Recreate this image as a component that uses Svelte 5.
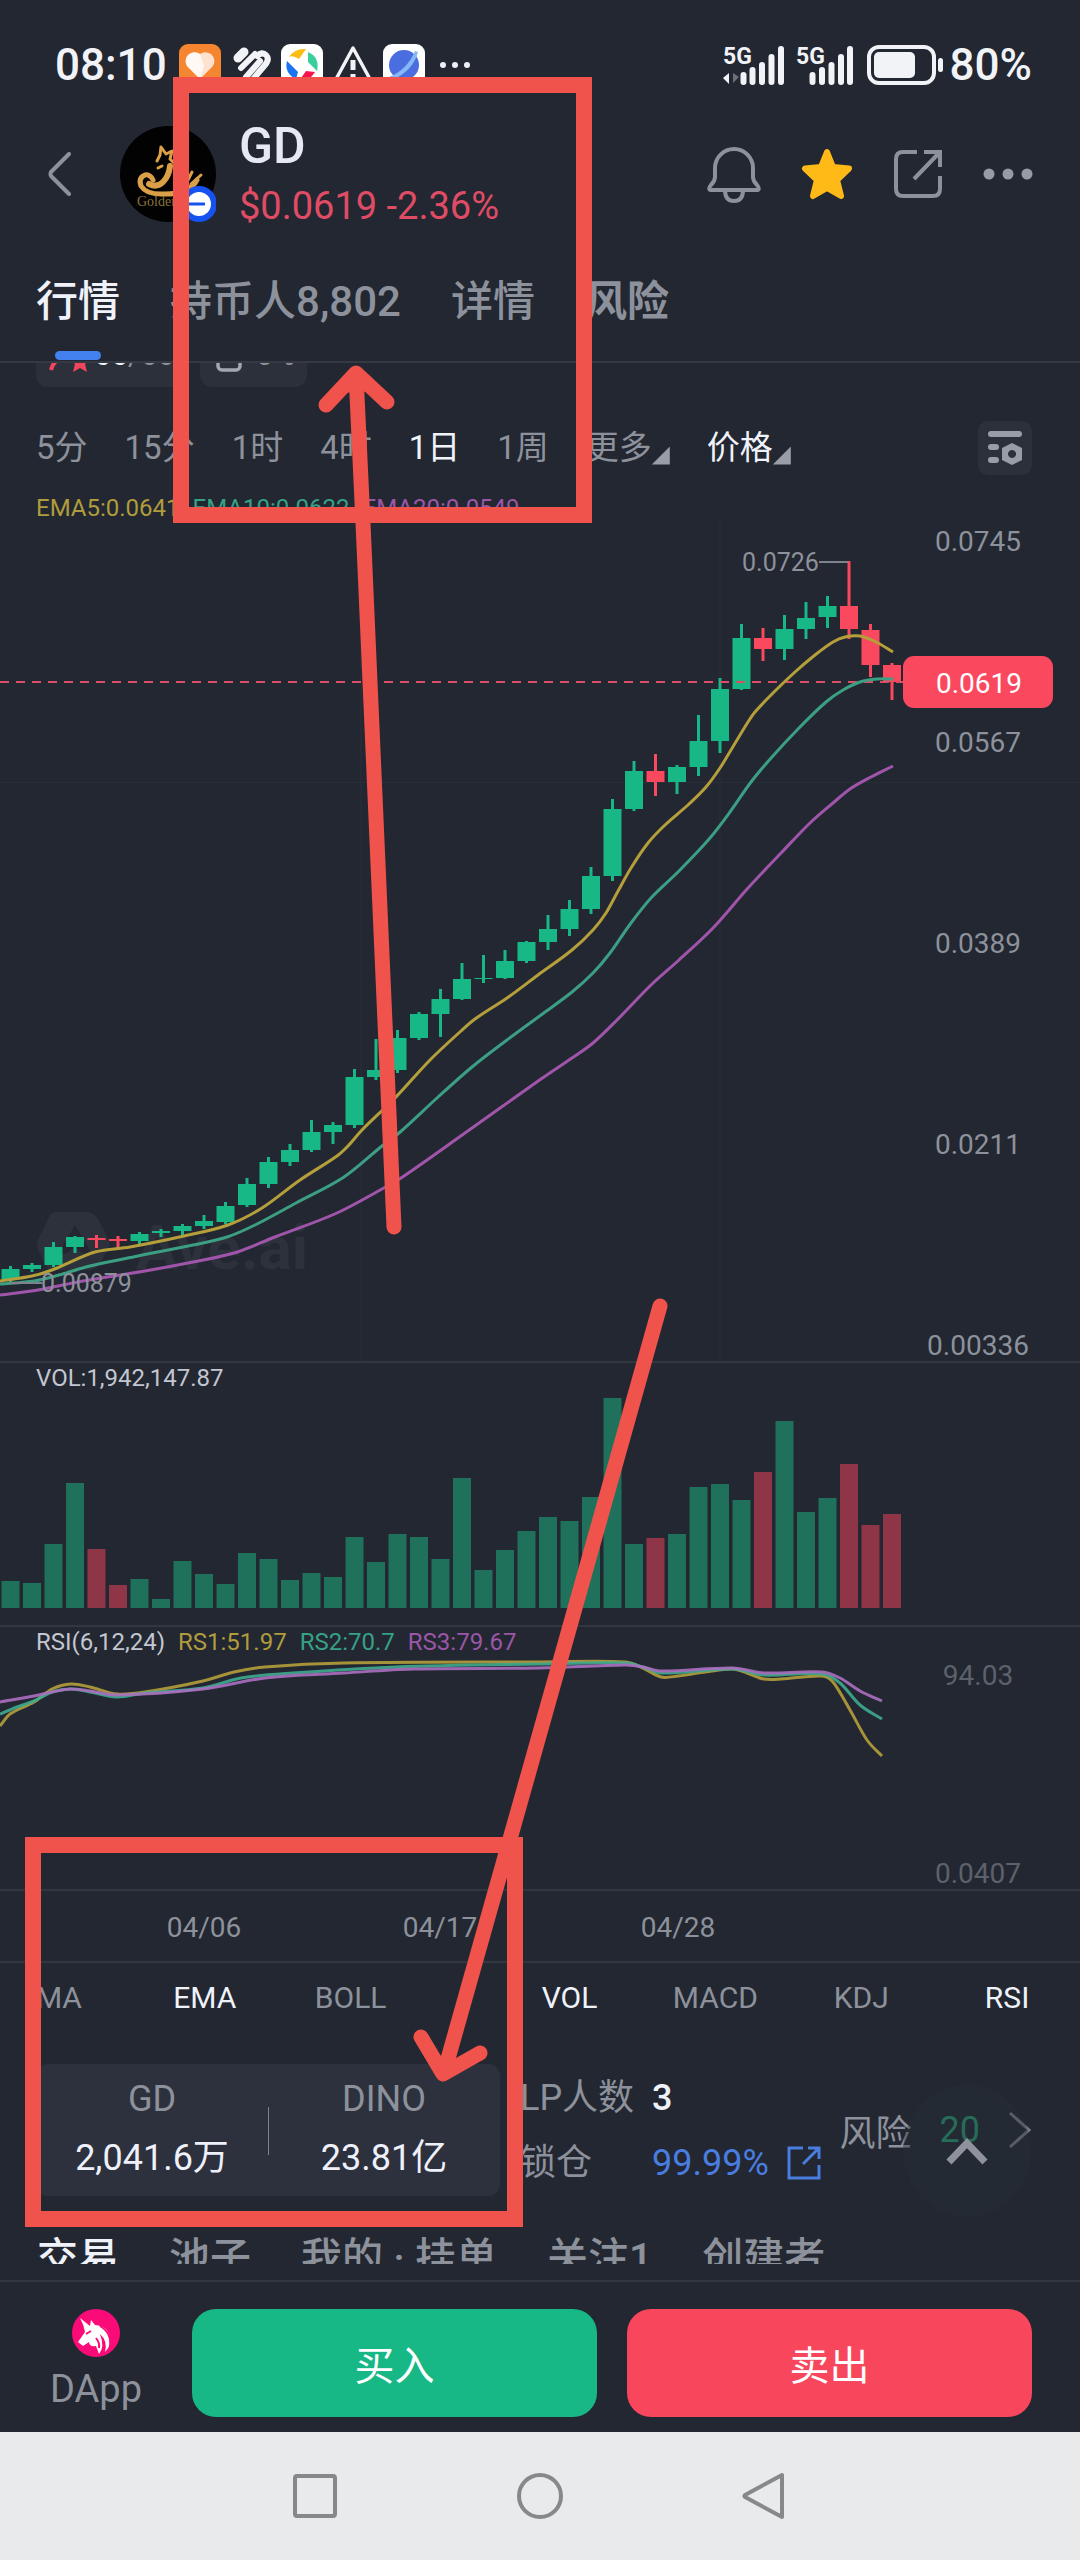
<script>
  const STEP = 21.5;
  const START = 10.5;

  // [open/close top, open/close bottom, high, low, falling]
  const candles = [
    [1269, 1279, 1266, 1283, 0], [1265, 1269, 1263, 1272, 0], [1247, 1265, 1242, 1267, 0],
    [1237, 1247, 1236, 1253, 0], [1238, 1240, 1235, 1248, 1], [1239, 1241, 1236, 1248, 1],
    [1234, 1241, 1232, 1244, 0], [1231, 1233, 1229, 1237, 0], [1226, 1231, 1224, 1235, 0],
    [1221, 1226, 1215, 1229, 0], [1206, 1222, 1202, 1224, 0], [1184, 1205, 1178, 1207, 0],
    [1162, 1184, 1157, 1188, 0], [1150, 1162, 1144, 1166, 0], [1132, 1150, 1120, 1152, 0],
    [1125, 1132, 1122, 1144, 0], [1077, 1125, 1069, 1128, 0], [1070, 1077, 1039, 1080, 0],
    [1038, 1070, 1030, 1073, 0], [1014, 1038, 1012, 1040, 0], [999, 1014, 989, 1037, 0],
    [979, 999, 963, 1000, 0], [978, 979, 955, 983, 0], [961, 978, 950, 979, 0],
    [942, 961, 941, 963, 0], [929, 942, 915, 950, 0], [909, 929, 900, 936, 0],
    [876, 909, 867, 914, 0], [809, 876, 799, 881, 0], [771, 809, 761, 811, 0],
    [771, 782, 754, 796, 1], [767, 782, 765, 794, 0], [741, 767, 715, 776, 0],
    [689, 741, 678, 753, 0], [638, 689, 624, 690, 0], [638, 649, 628, 661, 1],
    [629, 649, 615, 660, 0], [618, 629, 602, 639, 0], [606, 617, 596, 628, 0],
    [606, 629, 561, 639, 1], [630, 665, 624, 677, 1], [665, 682, 663, 700, 1]
  ];

  const volumes = [
    27, 25, 64, 125, 59, 23, 29, 9, 47, 34, 24, 55, 49, 28, 35, 31, 71, 46, 74, 71, 49,
    130, 38, 58, 77, 91, 87, 111, 210, 64, 70, 74, 121, 124, 108, 136, 187, 96, 110, 144, 83, 94
  ];

  const ema = [
    { color: '#a055ab', points: [[0, 1295], [38, 1290], [83, 1281], [145, 1271], [193, 1262], [234, 1253], [275, 1237], [337, 1213], [382, 1189], [401, 1178], [465, 1133], [541, 1079], [572, 1058], [593, 1043], [617, 1020], [651, 985], [679, 960], [713, 928], [748, 888], [782, 852], [810, 823], [833, 803], [850, 789], [871, 777], [893, 766]] },
    { color: '#3c9f83', points: [[0, 1284], [34, 1281], [59, 1275], [90, 1266], [138, 1256], [193, 1245], [227, 1237], [255, 1225], [296, 1203], [344, 1177], [382, 1146], [399, 1133], [437, 1098], [472, 1067], [507, 1040], [541, 1015], [572, 992], [593, 973], [610, 953], [631, 923], [651, 898], [679, 871], [710, 838], [730, 812], [751, 782], [772, 757], [799, 728], [826, 702], [843, 690], [860, 682], [877, 679], [893, 679]] },
    { color: '#b59f3b', points: [[0, 1281], [32, 1276], [52, 1270], [95, 1252], [130, 1247], [184, 1236], [228, 1225], [262, 1208], [300, 1180], [337, 1156], [348, 1146], [362, 1130], [396, 1097], [430, 1060], [461, 1031], [475, 1019], [507, 998], [538, 975], [572, 950], [593, 930], [606, 913], [617, 893], [631, 868], [648, 843], [665, 825], [689, 804], [706, 787], [720, 768], [734, 745], [748, 722], [755, 712], [774, 692], [795, 672], [815, 655], [833, 642], [845, 637], [860, 636], [876, 642], [893, 652]] }
  ];

  const rsi = [
    { color: '#b59f3b', points: [[0, 1726], [10, 1714], [34, 1702], [52, 1689], [71, 1684], [90, 1687], [117, 1694], [145, 1692], [203, 1681], [234, 1672], [265, 1667], [344, 1663], [540, 1662], [626, 1662], [643, 1668], [661, 1677], [678, 1676], [712, 1671], [733, 1669], [747, 1673], [764, 1679], [781, 1679], [822, 1676], [833, 1682], [850, 1710], [867, 1740], [882, 1756]] },
    { color: '#3fab8f', points: [[0, 1714], [17, 1707], [34, 1701], [52, 1692], [71, 1689], [90, 1692], [117, 1697], [145, 1693], [203, 1688], [241, 1678], [293, 1673], [396, 1667], [540, 1664], [626, 1663], [643, 1667], [661, 1673], [733, 1669], [764, 1675], [822, 1674], [840, 1683], [860, 1705], [882, 1719]] },
    { color: '#ab6fc0', points: [[0, 1702], [34, 1696], [52, 1692], [71, 1689], [90, 1691], [117, 1695], [203, 1689], [265, 1678], [344, 1673], [413, 1669], [540, 1668], [626, 1665], [643, 1667], [661, 1671], [733, 1668], [764, 1673], [822, 1672], [840, 1678], [860, 1691], [882, 1701]] }
  ];

  const scale = [['0.0745', 541], ['0.0567', 742], ['0.0389', 943], ['0.0211', 1144], ['0.00336', 1345]];
  const dates = [['04/06', 204], ['04/17', 440], ['04/28', 678]];
  const frames = ['5分', '15分', '1时', '4时', '1日', '1周'];

  function smooth(p) {
    let d = `M${p[0][0]} ${p[0][1]}`;
    for (let i = 0; i < p.length - 1; i++) {
      const a = p[i - 1] ?? p[i];
      const b = p[i];
      const c = p[i + 1];
      const e = p[i + 2] ?? c;
      const h = (c[0] - b[0]) / 3;
      const m1 = c[0] === a[0] ? 0 : (c[1] - a[1]) / (c[0] - a[0]);
      const m2 = e[0] === b[0] ? 0 : (e[1] - b[1]) / (e[0] - b[0]);
      d += `C${b[0] + h} ${b[1] + m1 * h} ${c[0] - h} ${c[1] - m2 * h} ${c[0]} ${c[1]}`;
    }
    return d;
  }
</script>

<div class="screen">
  <div class="status">
    <span class="clock">08:10</span>
    <svg class="app" viewBox="0 0 42 42"><rect width="42" height="42" rx="9" fill="#f5862f" /><path d="M21 35L8 22a9 9 0 0 1 13-12a9 9 0 0 1 13 12z" fill="#fde3cf" /><path d="M21 35L8 22a9 9 0 0 1 13-12l4 12z" fill="#fff" opacity=".75" /></svg>
    <svg class="app" viewBox="0 0 42 42" fill="none" stroke="#f2f3f7" stroke-linecap="round"><path d="M8 14L14 8" stroke-width="9" /><path d="M11 24L25 10" stroke-width="6" /><path d="M16 33L30 17M24 34L35 21q5-6 1-10q-4-4-9 1" stroke-width="6" /></svg>
    <svg class="app" viewBox="0 0 42 42"><rect width="42" height="42" rx="9" fill="#fff" /><path d="M8 13Q14 4 25 5L18 15Q12 11 8 13z" fill="#fcbd12" /><path d="M27 8q12 5 9 19L27 18z" fill="#38cf9c" /><path d="M6 17l11 11l-2 7Q3 29 6 17z" fill="#1a73f0" /><path d="M34 28q-6 10-16 9l7-10z" fill="#f5144b" /></svg>
    <svg class="app" viewBox="0 0 42 42" fill="none" stroke="#f2f3f7" stroke-width="3.5" stroke-linejoin="round"><path d="M21 4L39 37H3z" /><path d="M21 16v10M21 30v4" stroke-width="5" /></svg>
    <svg class="app" viewBox="0 0 42 42"><rect width="42" height="42" rx="9" fill="#fff" /><circle cx="21" cy="21" r="15" fill="#4a6de0" /><path d="M9 36Q30 27 35 8L32 7Q24 26 6 33z" fill="#85b8f6" /></svg>
    <svg class="more-dots" viewBox="0 0 30 8" fill="#eef0f5"><circle cx="3" cy="4" r="3" /><circle cx="15" cy="4" r="3" /><circle cx="27" cy="4" r="3" /></svg>
    <div class="signals">
      <svg class="signal" viewBox="0 0 62 40"><text x="0" y="19" class="net">5G</text><path d="M0 33l6-5v11z" fill="#f2f3f7" /><path d="M10 28v10l6-6z" fill="#6b6f78" /><path d="M20.500 30v7M29.500 25v12M39 20v17M48.500 12v25M58 4v33" stroke="#f2f3f7" stroke-width="6" stroke-linecap="round" /></svg>
      <svg class="signal second" viewBox="0 0 58 40"><text x="0" y="19" class="net">5G</text><path d="M16.500 30v7M26 25v12M35.500 20v17M45 12v25M54 4v33" stroke="#f2f3f7" stroke-width="6" stroke-linecap="round" /></svg>
      <svg class="battery" viewBox="0 0 76 40"><rect x="2" y="2" width="65" height="36" rx="10" fill="none" stroke="#f2f3f7" stroke-width="4" /><rect x="7" y="7" width="41" height="26" rx="5" fill="#f2f3f7" /><rect x="71" y="13" width="5" height="14" rx="2.500" fill="#f2f3f7" /></svg>
      <span class="clock">80%</span>
    </div>
  </div>

  <header class="header">
    <button class="icon back" aria-label="返回"><svg viewBox="0 0 24 44" fill="none" stroke="#8d919b" stroke-width="4" stroke-linecap="round" stroke-linejoin="round"><path d="M21 2L3 20q-1 2 0 4L21 42" /></svg></button>
    <div class="avatar">
      <svg viewBox="0 0 96 96">
        <circle cx="48" cy="48" r="48" fill="#020203" />
        <g fill="none" stroke="#d9a047" stroke-linecap="round" stroke-linejoin="round">
          <path d="M33 54q-3-6-8-5q-7 3-4 11q5 8 20 8q28 1 36-14" stroke-width="5" />
          <path d="M29 58q8 4 14-2q6-6 7-16" stroke-width="6" />
          <path d="M37 35l3-6l1-8l5 7l6-3l-2 8l5 5M71 58l10-9M68 54l4-8M42 40l-4 2" stroke-width="3" />
        </g>
        <text x="17" y="80" class="coin">Golden Dra</text>
        <circle cx="79" cy="78" r="18" fill="#1652f0" /><circle cx="79" cy="78" r="12" fill="#fff" /><path d="M66 78h19" stroke="#1652f0" stroke-width="3" />
      </svg>
    </div>
    <div class="title">
      <h1>GD</h1>
      <p>$0.0619 -2.36%</p>
    </div>
    <div class="actions">
      <button class="icon" aria-label="提醒"><svg width="54" height="58" viewBox="0 0 54 58" fill="none" stroke="#8d919b" stroke-width="4" stroke-linejoin="round"><path d="M8 23a19 19 0 0 1 38 0V32q0 4 4 8q4 5-1 5H5q-5 0-1-5q4-4 4-8zM18 45q0 11 9 11t9-11" /></svg></button>
      <button class="icon" aria-label="收藏"><svg width="52" height="52" viewBox="0 0 52 52"><path d="M26 4l6 15l16 1.500l-12 11.500l4 16l-14-8l-14 8l4-16l-12-11.500l16-1.500z" fill="#ffba18" stroke="#ffba18" stroke-width="6" stroke-linejoin="round" /></svg></button>
      <button class="icon" aria-label="分享"><svg width="50" height="50" viewBox="0 0 50 50" fill="none" stroke="#8d919b" stroke-width="4"><path d="M24 3H10Q3 3 3 10V40Q3 47 10 47H40Q47 47 47 40V27M31 3H47V18M47 3L21 30" /></svg></button>
      <button class="icon" aria-label="更多"><svg width="50" height="12" viewBox="0 0 50 12" fill="#979ba4"><circle cx="6" cy="6" r="5.500" /><circle cx="25" cy="6" r="5.500" /><circle cx="44" cy="6" r="5.500" /></svg></button>
    </div>
  </header>

  <nav class="tabs">
    <button class="tab active">行情</button>
    <button class="tab">持币人8,802</button>
    <button class="tab">详情</button>
    <button class="tab strong">风险</button>
  </nav>

  <div class="strip">
    <span class="pill"><svg width="46" height="34" viewBox="0 0 46 34"><path d="M3 32Q6 20 18 20" fill="none" stroke="#f2455e" stroke-width="4" /><path d="M32 14l3 7h7l-5 5l2 8l-7-4l-7 4l2-8l-5-5h7z" fill="#f2455e" /></svg><b>66</b>/66</span>
    <span class="pill lock"><svg width="26" height="34" viewBox="0 0 26 34" fill="none" stroke="#a2a6af" stroke-width="3.500"><rect x="2" y="12" width="22" height="20" rx="4" /><path d="M3 23h20M8 12V4h10v8" /></svg>0%</span>
  </div>

  <div class="frames">
    {#each frames as f}
      <button class="frame" class:active={f === '1日'}>{f}</button>
    {/each}
    <button class="frame drop">更多</button>
    <button class="frame drop active">价格</button>
    <button class="settings" aria-label="图表设置"><svg width="34" height="34" viewBox="0 0 34 34" fill="#989da7"><rect x="0" y="0" width="34" height="6" rx="3" /><rect x="0" y="13" width="11" height="6" rx="3" /><rect x="0" y="26" width="11" height="6" rx="3" /><path d="M24 12l10 5v12l-10 5l-10-5V17zM24 19a4 4 0 1 0 .1 0z" fill-rule="evenodd" /></svg></button>
  </div>

  <div class="legend">
    <span class="yellow">EMA5:0.0641</span><span class="green">EMA10:0.0622</span><span class="purple">EMA20:0.0549</span>
  </div>

  <svg class="plot" viewBox="0 522 1080 839">
    <path d="M0 782.500H1080M361 522V1361M720 522V1361" stroke="#282e38" stroke-width="1" />
    <g fill="#2c313b"><path fill-rule="evenodd" d="M56 1212H86Q94 1212 98 1219L109 1240Q111 1244 108 1249L100 1264Q96 1270 88 1270H54Q48 1270 45 1264L38 1249Q36 1244 38 1240L48 1219Q51 1212 56 1212zM75 1225L58 1254H66L75 1247L84 1254H92z" /><text x="136" y="1269" class="mark">Ave.ai</text></g>
    {#each candles as [top, bottom, high, low, down], i}
      <g fill={down ? '#fa485e' : '#18b886'}>
        <rect x={START + i * STEP - 9} y={top} width="18" height={bottom - top} />
        <rect x={START + i * STEP - 1.5} y={high} width="3" height={low - high} />
      </g>
    {/each}
    <path d="M0 682H903" stroke="#d94f65" stroke-width="2" stroke-dasharray="9 7" />
    {#each ema as line}
      <path d={smooth(line.points)} fill="none" stroke={line.color} stroke-width="3" />
    {/each}
    <path d="M819 562H848M10 1283H42" stroke="#7d828c" stroke-width="2" />
    <text x="742" y="571" class="note">0.0726</text>
    <text x="41" y="1292" class="note">0.00879</text>
    {#each scale as [label, y]}
      <text x="978" y={y + 10} class="axis">{label}</text>
    {/each}
    <rect x="903" y="656" width="150" height="52" rx="11" fill="#fa485e" />
    <text x="979" y="693" class="axis now">0.0619</text>
  </svg>

  <div class="legend ruled"><span>VOL:1,942,147.87</span></div>
  <svg class="plot" viewBox="0 0 1080 233">
    {#each volumes as v, i}
      <rect x={START + i * STEP - 9} y={216 - v} width="18" height={v} fill={candles[i][4] ? '#8e3548' : '#1f715c'} />
    {/each}
  </svg>

  <div class="legend ruled">
    <span>RSI(6,12,24)</span><span class="yellow">RS1:51.97</span><span class="green">RS2:70.7</span><span class="purple">RS3:79.67</span>
  </div>
  <svg class="plot" viewBox="0 1656 1080 233">
    {#each rsi as line}
      <path d={smooth(line.points)} fill="none" stroke={line.color} stroke-width="3" opacity=".9" />
    {/each}
    <text x="978" y="1685" class="axis dim">94.03</text>
    <text x="978" y="1883" class="axis dim">0.0407</text>
  </svg>
  <div class="ruled">
    <svg class="plot" viewBox="0 0 1080 70">
      {#each dates as [label, x]}
        <text {x} y="46" class="axis">{label}</text>
      {/each}
    </svg>
  </div>

  <div class="ruled indicators">
    <button>MA</button><button class="active">EMA</button><button>BOLL</button><i></i>
    <button class="active">VOL</button><button>MACD</button><button>KDJ</button><button class="active">RSI</button>
  </div>

  <section class="pool">
    <div class="pair">
      <div class="side"><span>GD</span><strong>2,041.6万</strong></div>
      <div class="side"><span>DINO</span><strong>23.81亿</strong></div>
    </div>
    <dl class="lp">
      <dt>LP人数</dt><dd>3</dd>
      <dt>锁仓</dt>
      <dd><a href="#lock">99.99%<svg width="34" height="34" viewBox="0 0 34 34" fill="none" stroke="#4a7de0" stroke-width="3"><path d="M16 2H2V32H32V19M21 2H32V13M32 2L16 18" /></svg></a></dd>
    </dl>
    <a class="risk" href="#risk">风险<b>20</b><svg width="24" height="38" viewBox="0 0 24 38" fill="none" stroke="#777b85" stroke-width="3"><path d="M2 2L21 19L2 36" /></svg></a>
    <button class="totop" aria-label="回到顶部"><svg width="42" height="28" viewBox="0 0 42 28" fill="none" stroke="#8f929b" stroke-width="7"><path d="M3 25L21 6L39 25" /></svg></button>
  </section>

  <nav class="subtabs">
    <button class="active">交易</button><button>池子</button><button>我的 · 挂单</button><button>关注1</button><button>创建者</button>
  </nav>

  <footer class="trade">
    <a class="dapp" href="#dapp">
      <svg width="48" height="48" viewBox="0 0 48 48"><circle cx="24" cy="24" r="24" fill="#fb0b78" /><path d="M8 9L18 17L19 11L23 16Q38 17 38 32Q38 38 33 43Q36 32 28 25Q33 38 27 45L24 37Q17 38 17 33L11 37L6 33L13 23Q12 16 8 9z" fill="#fff" /><path d="M28 17Q40 24 38 38M14 25l5-3M24 29q4 5 3 10" fill="none" stroke="#fb0b78" stroke-width="2" /></svg>
      DApp
    </a>
    <button class="buy">买入</button>
    <button class="sell">卖出</button>
  </footer>

  <div class="system">
    <button class="icon" aria-label="最近任务"><svg viewBox="0 0 48 48"><rect x="4" y="4" width="40" height="40" rx="2" /></svg></button>
    <button class="icon" aria-label="主页"><svg viewBox="0 0 48 48"><circle cx="24" cy="24" r="21" /></svg></button>
    <button class="icon" aria-label="后退"><svg viewBox="0 0 48 48"><path d="M41 3V45L4 25q-1-1 0-2z" /></svg></button>
  </div>

  <svg class="markup" viewBox="0 0 1080 2560" fill="none" stroke="#f0524c" stroke-width="16" aria-hidden="true">
    <rect x="181" y="85" width="403" height="430" />
    <rect x="33" y="1845" width="482" height="374" />
    <g stroke-width="15" stroke-linecap="round" stroke-linejoin="round">
      <path d="M394 1227L363 523L356 374M326 405L356 373L387 402" />
      <path d="M660 1306L521 1800L444 2073M421 2037L443 2074L480 2053" />
    </g>
    <path d="M356 371L338 392L372 390zM442 2078L432 2056L458 2062z" fill="#f0524c" stroke-width="2" />
  </svg>
</div>

<style>
  :global(body) { background: #e9eaeb; }
  .screen {
    position: relative;
    overflow: hidden;
    background: #222731;
    color: #8d919b;
    font-family: Roboto, "Noto Sans CJK SC", sans-serif;
    font-size: 36px;
  }
  button { appearance: none; border: 0; padding: 0; background: none; color: inherit; font: inherit; white-space: nowrap; }
  a { color: inherit; text-decoration: none; }
  svg { display: block; flex: none; }
  .active { color: #f0f2fa; }

  .status { display: flex; align-items: center; gap: 9px; padding: 37px 48px 11px 55px; color: #f2f3f7; }
  .clock { font-size: 44px; line-height: 56px; font-weight: 500; }
  .clock + .app { margin-left: 3px; }
  .app { width: 42px; height: 42px; }
  .more-dots { width: 30px; height: 8px; margin-left: 6px; }
  .signals { display: flex; align-items: center; margin-left: auto; }
  .signal { width: 62px; height: 40px; margin-right: 11px; overflow: visible; }
  .second { width: 58px; margin-right: 13px; }
  .battery { width: 76px; height: 40px; margin-right: 7px; }
  .net { font-size: 23px; font-weight: 700; fill: #f2f3f7; }

  .header { display: flex; align-items: center; padding: 8px 47px 8px 48px; }
  .back svg { width: 24px; height: 44px; }
  .avatar { width: 96px; margin: 0 23px 0 48px; }
  .coin { font-family: "Liberation Serif", serif; font-size: 14px; fill: #8a7238; }
  .title { padding-top: 4px; }
  .title h1 { margin: 0; font-size: 50px; line-height: 60px; font-weight: 500; color: #e6e9f4; }
  .title p { margin: 0; font-size: 38px; line-height: 60px; color: #e04c65; }
  .actions { display: flex; align-items: center; gap: 40px; margin-left: auto; }

  .tabs { display: flex; gap: 50px; padding: 28px 36px 0; border-bottom: 2px solid #343943; }
  .tab { font-size: 42px; line-height: 60px; font-weight: 500; padding-bottom: 29px; position: relative; }
  .tab.active::after { content: ""; position: absolute; left: 50%; bottom: 1px; width: 46px; height: 9px; margin-left: -23px; border-radius: 5px; background: #4380f0; }
  .strong { font-weight: 700; }

  .strip { display: flex; align-items: flex-end; gap: 14px; height: 24px; padding: 0 36px; overflow: hidden; }
  .pill { display: flex; align-items: center; padding: 12px 12px 14px 12px; border-radius: 12px; background: #2c303b; font-size: 30px; line-height: 36px; }
  .pill b { font-weight: 500; color: #f0f2fa; }
  .lock { gap: 14px; padding-left: 16px; }

  .frames { display: flex; align-items: center; gap: 37px; padding: 34px 48px 19px 36px; font-size: 33px; line-height: 54px; }
  .drop { display: flex; align-items: center; }
  .drop::after { content: ""; width: 18px; height: 18px; margin-top: 15px; background: #989da7; clip-path: polygon(100% 0, 100% 100%, 0 100%); }
  .settings { display: grid; place-items: center; width: 54px; height: 54px; margin-left: auto; border-radius: 10px; background: #2b303b; }

  .legend { display: flex; gap: 13px; padding: 0 36px; font-size: 24px; line-height: 28px; color: #c3c6d0; }
  .legend.ruled { padding-top: 1px; }
  .ruled { border-top: 2px solid #313640; }
  .yellow { color: #b09c3c; }
  .green { color: #36a184; }
  .purple { color: #9c56a8; }

  .plot { width: 100%; height: auto; }
  .axis { font-size: 28px; text-anchor: middle; fill: #8d919b; }
  .dim { fill: #5c616b; }
  .now { fill: #fff; }
  .note { font-size: 25px; fill: #8d919b; }
  .mark { font-size: 62px; font-weight: 700; }

  .indicators { display: grid; grid-template-columns: repeat(3, 1fr) 73px repeat(4, 1fr); padding: 15px 0 46px; margin-left: -14px; font-size: 30px; line-height: 40px; }

  .pool { position: relative; display: flex; align-items: center; padding: 0 48px 31px 36px; }
  .pair { display: flex; flex: 0 0 464px; padding: 11px 0 14px; border-radius: 12px; background: #2d313d; }
  .side { display: flex; flex: 1; flex-direction: column; align-items: center; gap: 11px; line-height: 48px; }
  .side + .side { background: linear-gradient(#7e828c, #7e828c) left 32px / 1px 48px no-repeat; }
  .side strong { font-weight: 400; color: #eef0fa; }
  .lp { display: grid; grid-template-columns: 132px auto; gap: 17px 0; margin: 0 0 0 20px; line-height: 48px; }
  .lp dd { margin: 0; font-weight: 500; color: #f0f2fa; }
  .lp a { display: flex; align-items: center; gap: 18px; font-weight: 400; color: #4a7de0; }
  .risk { display: flex; align-items: center; margin-left: auto; }
  .risk b { margin: 0 28px; font-weight: 400; color: #27946f; }
  .totop { position: absolute; right: 49px; bottom: 10px; display: grid; place-items: center; width: 128px; height: 132px; border-radius: 50%; background: rgb(41 48 58 / 40%); }

  .subtabs { display: flex; gap: 50px; height: 37px; padding: 0 37px; margin-bottom: 16px; overflow: hidden; font-size: 41px; line-height: 62px; font-weight: 500; }

  .trade { display: flex; gap: 30px; padding: 27px 48px 15px; border-top: 2px solid #313640; font-size: 40px; }
  .dapp { display: flex; flex-direction: column; align-items: center; gap: 8px; width: 96px; margin-right: 18px; font-size: 38px; line-height: 48px; }
  .buy, .sell { flex: 1; height: 108px; border-radius: 24px; color: #fff; }
  .buy { background: #18b886; }
  .sell { background: #f8465c; }

  .system { display: flex; justify-content: center; gap: 177px; padding: 40px 0; background: #e9eaeb; }
  .system svg { width: 48px; height: 48px; fill: none; stroke: #86888b; stroke-width: 4; stroke-linejoin: round; }
  .markup { position: absolute; inset: 0; width: 100%; height: 100%; pointer-events: none; }
</style>
